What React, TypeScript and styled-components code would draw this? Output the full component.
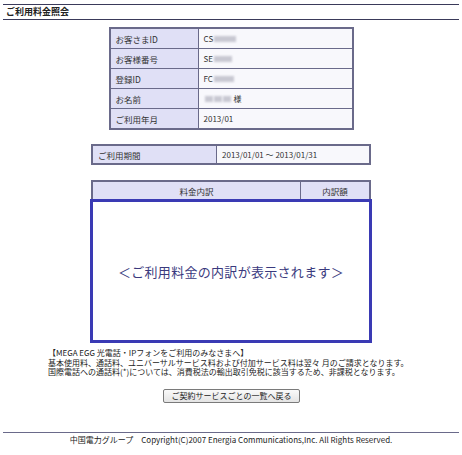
import React from 'react'
import styled, { createGlobalStyle } from 'styled-components'

const GlobalStyle = createGlobalStyle`
  html, body {
    margin: 0;
    padding: 0;
    background: #ffffff;
  }
  body {
    font-family: "Noto Sans CJK JP", "Noto Sans", sans-serif;
    color: #222222;
  }
`

const Page = styled.div`
  width: 462px;
  padding: 4px 3px 0;
  box-sizing: border-box;
`

const TitleBar = styled.div`
  height: 14px;
  border-top: 1px solid #3a3a5a;
  border-bottom: 1px solid #3a3a5a;
  display: flex;
  align-items: center;
  padding-left: 3px;
  font-size: 9px;
  font-weight: 700;
  line-height: 14px;
  color: #222222;
`

const Grid = styled.div<{ $width: number; $top: number; $cols: string; $row: number; $noBottom?: boolean }>`
  width: ${(p) => p.$width}px;
  margin: ${(p) => p.$top}px auto 0;
  display: grid;
  grid-template-columns: ${(p) => p.$cols};
  grid-auto-rows: ${(p) => p.$row}px;
  gap: 1px;
  background: #6a6a8a;
  border: 2px solid #6a6a8a;
  ${(p) => (p.$noBottom ? 'border-bottom: none;' : '')}
  box-sizing: border-box;
  font-size: 8.5px;
  color: #333333;
`

const Cell = styled.div<{ $kind: 'label' | 'value' | 'head' }>`
  display: flex;
  align-items: center;
  justify-content: ${(p) => (p.$kind === 'head' ? 'center' : 'flex-start')};
  padding-left: ${(p) => (p.$kind === 'head' ? 0 : 5)}px;
  background: ${(p) => (p.$kind === 'value' ? '#f8f8fc' : '#e0e0f6')};
  font-size: ${(p) => (p.$kind === 'value' ? 8 : 8.5)}px;
  line-height: 10px;
  white-space: nowrap;
`

const Blur = styled.span<{ $w: number }>`
  display: inline-block;
  width: ${(p) => p.$w}px;
  height: 6px;
  margin-left: 1px;
  background: #c8c8d2;
  filter: blur(1.2px);
`

const Suffix = styled.span`
  margin-left: 3px;
`

const BreakdownBox = styled.div`
  width: 282px;
  height: 144px;
  margin: 0 auto;
  border: 3px solid #3a3ab4;
  box-sizing: border-box;
  display: flex;
  align-items: center;
  justify-content: center;
  font-size: 13px;
  color: #3a3a7e;
  letter-spacing: 0.3px;
`

const Notes = styled.div`
  margin: 5px 0 0 45px;
  font-size: 8px;
  line-height: 9.5px;
  color: #222222;
  white-space: nowrap;
`

const ButtonRow = styled.div`
  display: flex;
  justify-content: center;
  margin-top: 12px;
`

const BackButton = styled.button`
  width: 137px;
  height: 14px;
  padding: 0;
  border: 1px solid #7a7a7a;
  border-radius: 2px;
  background: linear-gradient(#fafafa, #e4e4e4);
  font-family: "Noto Sans CJK JP", "Noto Sans", sans-serif;
  font-size: 8px;
  line-height: 12px;
  color: #222222;
  margin-left: 1px;
`

const Footer = styled.div`
  margin-top: 29px;
  border-top: 1px solid #6a6a8a;
  padding-top: 2px;
  text-align: center;
  font-size: 8px;
  line-height: 10px;
  color: #222222;
  white-space: nowrap;
`

const infoRows: { label: string; prefix: string; blur: number[]; suffix?: string }[] = [
  { label: 'お客さまID', prefix: 'CS', blur: [22] },
  { label: 'お客様番号', prefix: 'SE', blur: [18] },
  { label: '登録ID', prefix: 'FC', blur: [20] },
  { label: 'お名前', prefix: '', blur: [8, 8, 8], suffix: '様' },
  { label: 'ご利用年月', prefix: '2013/01', blur: [] },
]

export default function App() {
  return (
    <>
      <GlobalStyle />
      <Page>
        <TitleBar>ご利用料金照会</TitleBar>

        <Grid $width={245} $top={7} $cols="87px 1fr" $row={19}>
          {infoRows.map((r) => (
            <React.Fragment key={r.label}>
              <Cell $kind="label">{r.label}</Cell>
              <Cell $kind="value">
                {r.prefix}
                {r.blur.map((w, i) => (
                  <Blur key={i} $w={w} />
                ))}
                {r.suffix && <Suffix>{r.suffix}</Suffix>}
              </Cell>
            </React.Fragment>
          ))}
        </Grid>

        <Grid $width={280} $top={14} $cols="123px 1fr" $row={17}>
          <Cell $kind="label">ご利用期間</Cell>
          <Cell $kind="value">2013/01/01 ～ 2013/01/31</Cell>
        </Grid>

        <Grid $width={280} $top={15} $cols="207px 1fr" $row={17} $noBottom>
          <Cell $kind="head">料金内訳</Cell>
          <Cell $kind="head">内訳額</Cell>
        </Grid>
        <BreakdownBox>＜ご利用料金の内訳が表示されます＞</BreakdownBox>

        <Notes>
          【MEGA EGG 光電話・IPフォンをご利用のみなさまへ】
          <br />
          基本使用料、通話料、ユニバーサルサービス料および付加サービス料は翌々 月のご請求となります。
          <br />
          国際電話への通話料(*)については、消費税法の輸出取引免税に該当するため、非課税となります。
        </Notes>

        <ButtonRow>
          <BackButton type="button">ご契約サービスごとの一覧へ戻る</BackButton>
        </ButtonRow>

        <Footer>中国電力グループ　Copyright(C)2007 Energia Communications,Inc. All Rights Reserved.</Footer>
      </Page>
    </>
  )
}
